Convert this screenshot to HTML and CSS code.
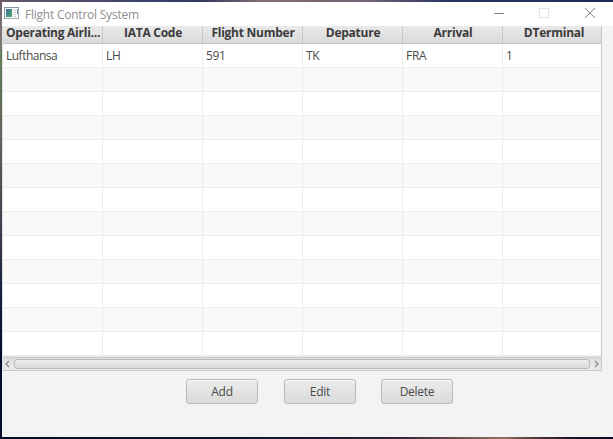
FILE: index.html
```html
<!DOCTYPE html>
<html lang="en">
<head>
<meta charset="utf-8">
<title>Flight Control System</title>
<link rel="stylesheet" href="styles.css">
</head>
<body>
<div class="window">
  <header class="titlebar">
    <svg class="app-icon" width="15" height="12" viewBox="0 0 15 12">
      <defs><linearGradient id="g" x1="0" y1="0" x2="1" y2="1"><stop offset="0" stop-color="#3c70a8"/><stop offset="1" stop-color="#4fb068"/></linearGradient></defs>
      <rect x=".5" y=".5" width="14" height="11" fill="#f7f9fa" stroke="#a3adb5"/>
      <path d="M0 .5h15M.5 0v12" stroke="#87939d"/>
      <rect x="2" y="2" width="6" height="8" fill="url(#g)"/>
      <path d="M9 3.5h3M9 5.5h3M9 7.5h3M9 9.5h3" stroke="#d0d4d7"/>
      <path d="M13.5 2v5" stroke="#6d93ab"/>
    </svg>
    <span class="title">Flight Control System</span>
    <svg class="controls" width="104" height="24" viewBox="0 0 104 24" fill="none">
      <path d="M0 11.5h10" stroke="#858585"/>
      <rect x="45.5" y="6.5" width="9" height="9" stroke="#e4e4e4"/>
      <path d="M91 6l10 10M101 6L91 16" stroke="#858585"/>
    </svg>
  </header>
  <main class="content">
    <div class="table">
      <div class="row head"><span class="first">Operating Airli...</span><span>IATA Code</span><span>Flight Number</span><span>Depature</span><span>Arrival</span><span>DTerminal</span></div>
      <div class="row"><span class="airline">Lufthansa</span><span>LH</span><span>591</span><span>TK</span><span>FRA</span><span>1</span></div>
      <div class="row"><span></span><span></span><span></span><span></span><span></span><span></span></div>
      <div class="row"><span></span><span></span><span></span><span></span><span></span><span></span></div>
      <div class="row"><span></span><span></span><span></span><span></span><span></span><span></span></div>
      <div class="row"><span></span><span></span><span></span><span></span><span></span><span></span></div>
      <div class="row"><span></span><span></span><span></span><span></span><span></span><span></span></div>
      <div class="row"><span></span><span></span><span></span><span></span><span></span><span></span></div>
      <div class="row"><span></span><span></span><span></span><span></span><span></span><span></span></div>
      <div class="row"><span></span><span></span><span></span><span></span><span></span><span></span></div>
      <div class="row"><span></span><span></span><span></span><span></span><span></span><span></span></div>
      <div class="row"><span></span><span></span><span></span><span></span><span></span><span></span></div>
      <div class="row"><span></span><span></span><span></span><span></span><span></span><span></span></div>
      <div class="row"><span></span><span></span><span></span><span></span><span></span><span></span></div>
      <div class="scrollbar">
        <svg width="6" height="8" viewBox="0 0 6 8" fill="none"><path d="M5 1L2 4l3 3" stroke="#8d8d8d" stroke-width="1.4"/></svg>
        <div class="thumb"></div>
        <svg width="5" height="8" viewBox="0 0 5 8" fill="none"><path d="M1 1l3 3-3 3" stroke="#8d8d8d" stroke-width="1.4"/></svg>
      </div>
    </div>
    <div class="actions"><button>Add</button><button class="mid">Edit</button><button>Delete</button></div>
  </main>
</div>
</body>
</html>
```
FILE: styles.css
```css
* { box-sizing: border-box; }
body {
  margin: 0;
  width: 613px;
  height: 439px;
  overflow: hidden;
  padding: 2px 0 2px 2px;
  font: 12px "Open Sans", "Noto Sans", sans-serif;
  color: #4b4b4b;
  background:
    linear-gradient(90deg, #665a68, #39406e 25%, #32365f 33%, #806c76 42%, #756576 60%, #2c3564 72%, #1d2a58) 0 0 / 100% 2px no-repeat,
    linear-gradient(90deg, #070d27, #10142d 45%, #302337 65%, #93705f 82%, #4a3032 88%, #160f25 94%, #100b22) 0 100% / 100% 2px no-repeat,
    linear-gradient(#6a5f68, #81767a 8%, #62805b 14%, #5d6e55 22%, #66605e 32%, #40434e 50%, #151d3e 68%, #040b2b 80%, #070d2b) 0 0 / 2px 100% no-repeat;
}
.window { height: 435px; display: flex; flex-direction: column; background: #f3f3f3; }
.titlebar { height: 24px; flex: none; display: flex; align-items: center; background: #fff; padding-left: 2px; }
.app-icon { margin: 0 6px 2px 0; }
.title { color: #8f8f8f; font-size: 12px; line-height: 25px; height: 24px; letter-spacing: -0.23px; white-space: nowrap; }
.controls { margin-left: auto; margin-right: 15px; }
.content { flex: 1; }
.table { width: 600px; border-left: 1px solid #e0e0e0; border-right: 1px solid #c8c8c8; background: #fff; }
.row { display: grid; grid-template-columns: repeat(5, 100px) 98px; height: 24px; border-bottom: 1px solid #ededed; line-height: 24px; }
.row:nth-child(odd) { background: #f9f9f9; }
.row span { border-right: 1px solid #ededed; padding-left: 3px; letter-spacing: -0.3px; white-space: nowrap; }
.row span:last-child { border-right: 0; }
.row .airline { letter-spacing: -0.5px; }
.row.head {
  height: 18px;
  line-height: 14px;
  font-weight: 700;
  color: #3b3b3b;
  background: linear-gradient(#e9e9e9, #dadada);
  border-bottom-color: #c6c6c6;
}
.row.head span { text-align: center; border-color: #c8c8c8; padding: 0 0 0 1px; letter-spacing: -0.25px; }
.row.head span:last-child { padding-left: 4px; }
.row.head .first { text-align: left; padding-left: 3px; letter-spacing: -0.25px; }
.scrollbar {
  height: 15px;
  display: flex;
  align-items: center;
  justify-content: space-between;
  padding: 1px 2px 0 1px;
  background: linear-gradient(#dcdcdc, #ebebeb);
  border: solid #cbcbcb;
  border-width: 1px 0;
  border-top-color: #e6e6e6;
  box-shadow: inset 0 1px #cbcbcb;
}
.thumb { width: 576px; height: 10px; border: 1px solid #b9b9b9; border-radius: 3px; background: linear-gradient(#ededed, #dcdcdc); }
.actions { display: flex; padding: 8px 0 0 184px; }
button {
  width: 72px;
  height: 25px;
  padding: 0;
  border: 1px solid #bababa;
  border-radius: 3px;
  background: linear-gradient(#ececec, #dadada);
  box-shadow: inset 0 1px #f6f6f6;
  font: inherit;
  letter-spacing: -0.25px;
  color: #4b4b4b;
}
.mid { margin: 0 25px 0 26px; }
```
